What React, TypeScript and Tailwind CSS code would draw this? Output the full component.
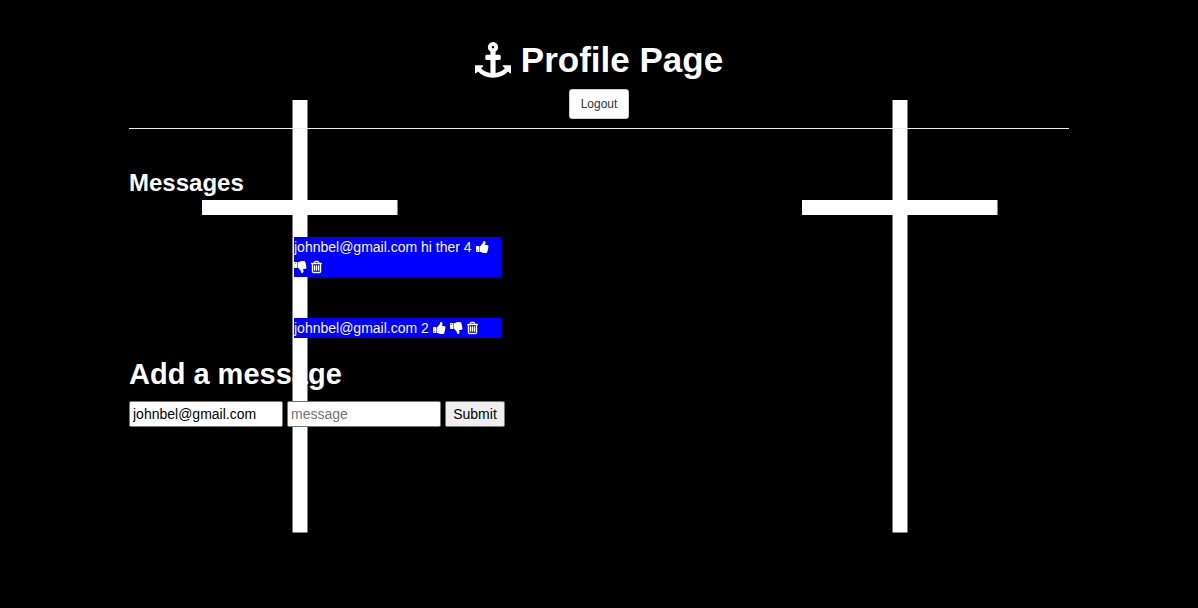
import React from "react";

const THUMB =
  "M320 1344q0-26-19-45t-45-19q-27 0-45.5 19t-18.5 45q0 27 18.5 45.5t45.5 18.5q26 0 45-18.5t19-45.5zm160-512v640q0 26-19 45t-45 19h-288q-26 0-45-19t-19-45v-640q0-26 19-45t45-19h288q26 0 45 19t19 45zm1184 0q0 86-55 149 15 44 15 76 3 76-43 137 17 56 0 117-15 57-54 94 9 112-49 181-64 76-197 78h-129q-66 0-144-15.5t-121.5-29-120.5-39.5q-123-43-158-44-26-1-45-19.5t-19-44.5v-641q0-25 18-43.5t43-20.5q24-2 76-59t101-121q68-87 101-120 18-18 31-48t17.5-48.5 13.5-60.5q7-39 12.5-61t19.5-52 34-50q19-19 45-19 46 0 82.5 10.5t60 26 40 40.5 24 45 12 50 5 45 .5 39q0 38-9.5 76t-19 60-27.5 56q-3 6-10 18t-11 22-8 24h277q78 0 135 57t57 135z";

function AnchorIcon() {
  return (
    <svg viewBox="0 0 1792 1792" fill="currentColor" aria-hidden="true" className="size-9 shrink-0">
      <path d="M960 256q0-26-19-45t-45-19-45 19-19 45 19 45 45 19 45-19 19-45zm832 928v352q0 22-20 30-8 2-12 2-12 0-23-9l-93-93q-119 143-318.5 226.5t-429.5 83.5-429.5-83.5-318.5-226.5l-93 93q-9 9-23 9-4 0-12-2-20-8-20-30v-352q0-14 9-23t23-9h352q22 0 30 20 8 19-7 35l-100 100q67 91 189.5 153.5t271.5 82.5v-647h-192q-26 0-45-19t-19-45v-128q0-26 19-45t45-19h192v-163q-58-34-93-92.5t-35-128.5q0-106 75-181t181-75 181 75 75 181q0 70-35 128.5t-93 92.5v163h192q26 0 45 19t19 45v128q0 26-19 45t-45 19h-192v647q149-20 271.5-82.5t189.5-153.5l-100-100q-15-16-7-35 8-20 30-20h352q14 0 23 9t9 23z" />
    </svg>
  );
}

function ThumbUpIcon() {
  return (
    <svg viewBox="64 0 1664 1792" fill="currentColor" aria-hidden="true" className="block h-[14px] w-[13px]">
      <path d={THUMB} />
    </svg>
  );
}

function ThumbDownIcon() {
  return (
    <svg viewBox="64 0 1664 1792" fill="currentColor" aria-hidden="true" className="block h-[14px] w-[13px]">
      <path d={THUMB} transform="translate(0 1792) scale(1 -1)" />
    </svg>
  );
}

function TrashIcon() {
  return (
    <svg viewBox="192 0 1408 1792" fill="currentColor" aria-hidden="true" className="block h-[14px] w-[11px]">
      <path
        stroke="currentColor"
        strokeWidth="50"
        d="M704 736v576q0 14-9 23t-23 9h-64q-14 0-23-9t-9-23v-576q0-14 9-23t23-9h64q14 0 23 9t9 23zm256 0v576q0 14-9 23t-23 9h-64q-14 0-23-9t-9-23v-576q0-14 9-23t23-9h64q14 0 23 9t9 23zm256 0v576q0 14-9 23t-23 9h-64q-14 0-23-9t-9-23v-576q0-14 9-23t23-9h64q14 0 23 9t9 23zm128 724v-948h-896v948q0 22 7 40.5t14.5 27 10.5 8.5h832q3 0 10.5-8.5t14.5-27 7-40.5zm-672-1076h448l-48-117q-7-9-17-11h-317q-10 2-17 11zm928 32v64q0 14-9 23t-23 9h-96v948q0 83-47 143.5t-113 60.5h-832q-66 0-113-58.5t-47-141.5v-952h-96q-14 0-23-9t-9-23v-64q0-14 9-23t23-9h309l70-167q15-37 54-63t79-26h320q40 0 79 26t54 63l70 167h309q14 0 23 9t9 23z"
      />
    </svg>
  );
}

function CrossBackdrop() {
  return (
    <svg aria-hidden="true" className="absolute inset-0 -z-10 h-full w-full">
      <defs>
        <pattern id="crosses" width="600" height="632" patternUnits="userSpaceOnUse">
          <rect x="292.5" y="100" width="15" height="432.5" fill="#fff" />
          <rect x="202" y="200" width="195.5" height="15" fill="#fff" />
        </pattern>
      </defs>
      <rect width="100%" height="100%" fill="url(#crosses)" />
    </svg>
  );
}

const messages = [
  { name: "johnbel@gmail.com", text: "hi ther", votes: 4 },
  { name: "johnbel@gmail.com", text: "", votes: 2 },
];

const iconButton = "inline-block align-[-2px]";
const field =
  "h-[26px] w-[154px] rounded-xs border border-[#767676] bg-white px-[3px] text-black placeholder:text-[#757575]";

export default function App() {
  return (
    <div className="relative isolate min-h-screen bg-black font-['Liberation_Sans',Arial,sans-serif] text-sm leading-5 text-white">
      <CrossBackdrop />
      <div className="mx-auto max-w-[970px] px-[15px]">
        <header className="flex flex-col items-center border-b border-[#eee] pt-10 pb-[9px]">
          <h1 className="mb-[9px] flex h-10 items-center gap-[10px] text-[35px] leading-10 font-bold">
            <AnchorIcon />
            Profile Page
          </h1>
          <a
            href="#logout"
            className="flex h-[30px] w-[60px] items-center justify-center rounded-[3px] border border-[#ccc] bg-white text-xs text-[#333]"
          >
            Logout
          </a>
        </header>

        <main>
          <section className="pt-10">
            <h2 className="text-2xl leading-[27px] font-bold">Messages</h2>
            <ul className="ml-[165px] flex w-[207px] flex-col gap-[41px] pt-[41px]">
              {messages.map((m, i) => (
                <li key={i} className="bg-[#00f]">
                  <span>{m.name}</span> {m.text && <span>{m.text} </span>}
                  <span>{m.votes}</span>{" "}
                  <button type="button" aria-label="Thumbs up" className={iconButton}>
                    <ThumbUpIcon />
                  </button>{" "}
                  <button type="button" aria-label="Thumbs down" className={iconButton}>
                    <ThumbDownIcon />
                  </button>{" "}
                  <button type="button" aria-label="Delete" className={iconButton}>
                    <TrashIcon />
                  </button>
                </li>
              ))}
            </ul>
          </section>

          <section className="pt-5 pb-10">
            <h2 className="mb-[10px] text-[29px] leading-[33px] font-bold">Add a message</h2>
            <form className="flex flex-wrap gap-1" onSubmit={(e) => e.preventDefault()}>
              <input type="text" name="name" aria-label="Name" defaultValue="johnbel@gmail.com" className={field} />
              <input type="text" name="msg" aria-label="Message" placeholder="message" className={field} />
              <button
                type="submit"
                className="h-[26px] w-[60px] rounded-xs border border-[#767676] bg-[#efefef] text-black"
              >
                Submit
              </button>
            </form>
          </section>
        </main>
      </div>
    </div>
  );
}
